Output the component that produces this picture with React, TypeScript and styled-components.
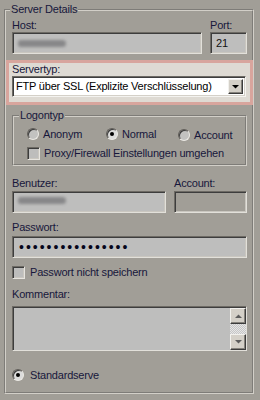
import React from 'react';
import styled, { createGlobalStyle } from 'styled-components';

const Global = createGlobalStyle`
  html, body {
    margin: 0;
    padding: 0;
    background: #a19e97;
  }
  body {
    font-family: "Liberation Sans", Arial, sans-serif;
    font-size: 11px;
    letter-spacing: -0.2px;
    color: #17173b;
  }
`;

const Page = styled.div`
  width: 260px;
  height: 400px;
  box-sizing: border-box;
  padding: 3px 6px 0 4px;
`;

const Group = styled.fieldset<{ $pad: string; $top?: number }>`
  margin: ${p => p.$top ?? 0}px 0 0;
  min-width: 0;
  border: 2px groove #d2cfc8;
  padding: ${p => p.$pad};
`;

const Legend = styled.legend<{ $shift: number }>`
  margin-left: ${p => p.$shift}px;
  padding: 0 1px;
  line-height: 13px;
`;

const Label = styled.div<{ $gap?: number; $top?: number }>`
  line-height: 13px;
  height: 13px;
  white-space: nowrap;
  margin-top: ${p => p.$top ?? 0}px;
  margin-bottom: ${p => p.$gap ?? 0}px;
`;

const Pair = styled.div<{ $cols: string; $top?: number }>`
  display: grid;
  grid-template-columns: ${p => p.$cols};
  column-gap: 8px;
  margin-top: ${p => p.$top ?? 0}px;
`;

const Field = styled.div<{ $h: number; $disabled?: boolean; $pl?: number }>`
  box-sizing: border-box;
  height: ${p => p.$h}px;
  border: 1px solid;
  border-color: #6d6a64 #e2e0da #e2e0da #6d6a64;
  box-shadow: inset 1px 1px 0 #3d3d3d, inset -1px -1px 0 #c9c6bf;
  background: ${p => (p.$disabled ? '#a19e97' : '#bebebd')};
  display: flex;
  align-items: center;
  padding-left: ${p => p.$pl ?? 5}px;
  color: #111;
  overflow: hidden;
`;

const Redacted = styled.span<{ $w: number; $dy?: number }>`
  display: block;
  width: ${p => p.$w}px;
  height: 7px;
  margin-top: ${p => p.$dy ?? 0}px;
  border-radius: 4px 5px 5px 4px;
  background: #7e7e80;
  filter: blur(1.6px);
  opacity: 0.85;
`;

const Dots = styled.span`
  font-size: 14px;
  letter-spacing: 2px;
  color: #05051a;
  line-height: 1;
`;

const Highlight = styled.div`
  margin: 6px -6px 0;
  border: 3px solid #d8a59d;
  background: #dedad3;
  padding: 0 4px 5px 3px;
`;

const Select = styled.div`
  box-sizing: border-box;
  height: 21px;
  background: #fff;
  border: 1px solid;
  border-color: #6d6a64 #f4f3f0 #f4f3f0 #6d6a64;
  box-shadow: inset 1px 1px 0 #3d3d3d, inset -1px -1px 0 #d4d0c8;
  display: flex;
  align-items: stretch;
  padding: 2px 2px 2px 3px;
  color: #000;
`;

const SelectText = styled.span`
  flex: 1;
  white-space: nowrap;
  line-height: 15px;
`;

const RaisedButton = styled.span<{ $w: number; $h?: number }>`
  flex: none;
  box-sizing: border-box;
  width: ${p => p.$w}px;
  height: ${p => (p.$h ? `${p.$h}px` : 'auto')};
  background: #d4d0c8;
  border: 1px solid;
  border-color: #f2f1ed #3c3c3c #3c3c3c #f2f1ed;
  box-shadow: inset -1px -1px 0 #85827c;
  display: flex;
  align-items: center;
  justify-content: center;
`;

const RadioRow = styled.div`
  display: grid;
  grid-template-columns: 79px 72px auto;
  height: 14px;
  align-items: center;
`;

const Option = styled.label<{ $drop?: number; $top?: number; $gap?: number }>`
  display: flex;
  align-items: center;
  gap: ${p => p.$gap ?? 4}px;
  height: 14px;
  white-space: nowrap;
  margin-top: ${p => (p.$drop ?? 0) + (p.$top ?? 0)}px;
`;

const Radio = styled.span<{ $checked?: boolean }>`
  flex: none;
  box-sizing: border-box;
  width: 12px;
  height: 12px;
  border-radius: 50%;
  border: 1px solid;
  border-color: #5f5c57 #ebe9e4 #ebe9e4 #5f5c57;
  background: ${p => (p.$checked ? '#dcdcdb' : '#c2c2c0')};
  box-shadow: inset 1px 1px 0 #3c3c3c;
  display: flex;
  align-items: center;
  justify-content: center;

  &::after {
    content: '';
    display: ${p => (p.$checked ? 'block' : 'none')};
    width: 4px;
    height: 4px;
    border-radius: 50%;
    background: #000;
  }
`;

const Check = styled.span`
  flex: none;
  box-sizing: border-box;
  width: 13px;
  height: 13px;
  border: 1px solid;
  border-color: #6d6a64 #e6e4df #e6e4df #6d6a64;
  box-shadow: inset 1px 1px 0 #3c3c3c, inset -1px -1px 0 #c9c6bf;
  background: #bdbdbc;
`;

const Memo = styled.div`
  box-sizing: border-box;
  height: 45px;
  border: 1px solid;
  border-color: #6d6a64 #e2e0da #e2e0da #6d6a64;
  box-shadow: inset 1px 1px 0 #3d3d3d;
  background: #bebebd;
  display: flex;
  justify-content: flex-end;
  padding: 1px 0 0 1px;
`;

const ScrollBar = styled.div`
  width: 16px;
  display: flex;
  flex-direction: column;
`;

const Track = styled.div`
  flex: 1;
  background: repeating-conic-gradient(#c6c6c6 0 25%, #e6e6e6 0 50%) 0 0 / 2px 2px;
`;

const Arrow = ({ up, color }: { up?: boolean; color: string }) => (
  <svg width="7" height="4" viewBox="0 0 7 4">
    <path d={up ? 'M0 4H7L3.5 0.5Z' : 'M0 0H7L3.5 3.5Z'} fill={color} />
  </svg>
);

export default function App() {
  return (
    <>
      <Global />
      <Page>
        <Group $pad="3px 5px 10px 6px">
          <Legend $shift={-2}>Server Details</Legend>

          <Pair $cols="190px 37px">
            <div>
              <Label>Host:</Label>
              <Field $h={22} $pl={5}>
                <Redacted $w={48} />
              </Field>
            </div>
            <div>
              <Label>Port:</Label>
              <Field $h={22}>21</Field>
            </div>
          </Pair>

          <Highlight>
            <Label>Servertyp:</Label>
            <Select>
              <SelectText>FTP über SSL (Explizite Verschlüsselung)</SelectText>
              <RaisedButton $w={15}>
                <Arrow color="#000" />
              </RaisedButton>
            </Select>
          </Highlight>

          <Group $pad="4px 5px 4px 13px" $top={4}>
            <Legend $shift={-8}>Logontyp</Legend>
            <RadioRow>
              <Option>
                <Radio />
                Anonym
              </Option>
              <Option>
                <Radio $checked />
                Normal
              </Option>
              <Option $drop={2}>
                <Radio />
                Account
              </Option>
            </RadioRow>
            <Option $top={6}>
              <Check />
              Proxy/Firewall Einstellungen umgehen
            </Option>
          </Group>

          <Pair $cols="154px 73px" $top={11}>
            <div>
              <Label $gap={1}>Benutzer:</Label>
              <Field $h={22}>
                <Redacted $w={48} $dy={-4} />
              </Field>
            </div>
            <div>
              <Label $gap={1}>Account:</Label>
              <Field $h={22} $disabled />
            </div>
          </Pair>

          <Label $top={8} $gap={2}>Passwort:</Label>
          <Field $h={22} $pl={6}>
            <Dots>••••••••••••••••</Dots>
          </Field>

          <Option $top={7} $gap={5}>
            <Check />
            Passwort nicht speichern
          </Option>

          <Label $top={9} $gap={5}>Kommentar:</Label>
          <Memo>
            <ScrollBar>
              <RaisedButton $w={16} $h={16}>
                <Arrow up color="#5c5c5c" />
              </RaisedButton>
              <Track />
              <RaisedButton $w={16} $h={16}>
                <Arrow color="#5c5c5c" />
              </RaisedButton>
            </ScrollBar>
          </Memo>

          <Option $top={17} $gap={6}>
            <Radio $checked />
            Standardserve
          </Option>
        </Group>
      </Page>
    </>
  );
}
